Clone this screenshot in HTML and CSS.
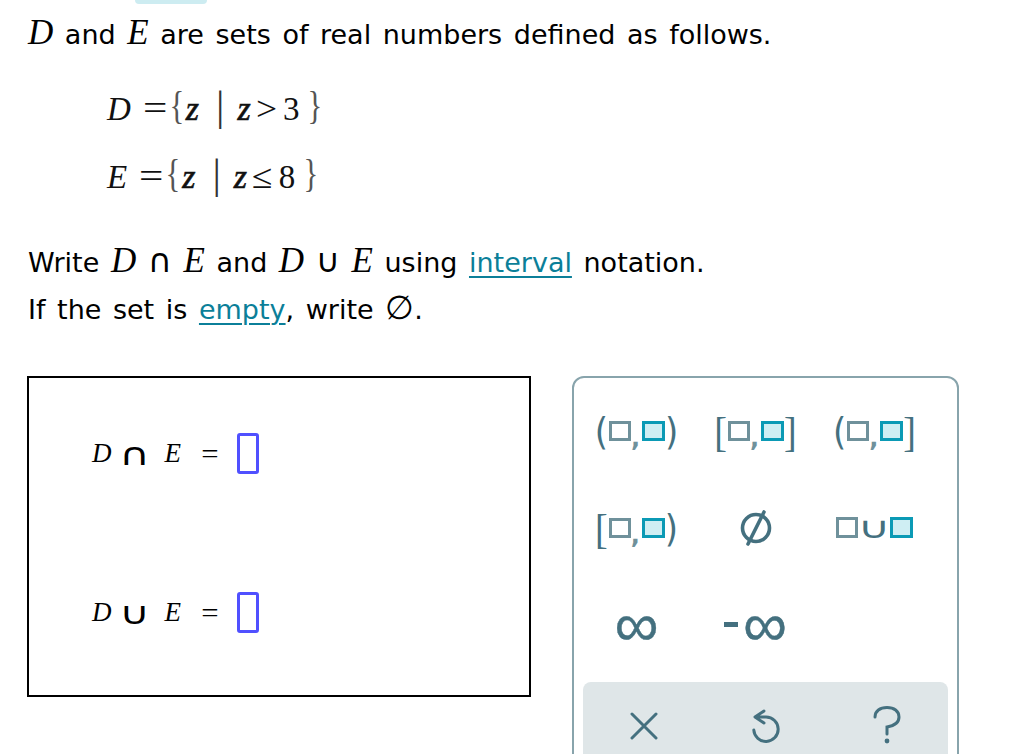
FILE: index.html
```html
<!DOCTYPE html>
<html>
<head>
<meta charset="utf-8">
<link rel="stylesheet" href="styles.css">
</head>
<body>
<div class="page">
  <div class="tab"></div>
  <p class="intro"><i class="m">D</i> and <i class="m">E</i> are sets of real numbers defined as follows.</p>
  <div class="defs">
    <div class="eq"><i class="v">D</i><span class="op">=</span><span class="br">{</span><i class="z">z</i><span class="bar">|</span><i class="z">z</i><span class="op2">&gt;</span><span class="n">3</span><span class="br br2">}</span></div>
    <div class="eq"><i class="v">E</i><span class="op">=</span><span class="br">{</span><i class="z">z</i><span class="bar">|</span><i class="z">z</i><span class="op2">≤</span><span class="n">8</span><span class="br br2">}</span></div>
  </div>
  <p class="q">Write <i class="m">D</i> <span class="set">∩</span> <i class="m">E</i> and <i class="m">D</i> <span class="set">∪</span> <i class="m">E</i> using <a class="lnk" href="#">interval</a> notation.</p>
  <p class="q">If the set is <a class="lnk" href="#">empty</a>, write <span class="empty">∅</span>.</p>

  <div class="work">
    <div class="answers">
      <div class="arow"><i class="av">D</i><span class="aset">∩</span><i class="av ae">E</i><span class="aeq">=</span><span class="slot"></span></div>
      <div class="arow"><i class="av">D</i><span class="aset">∪</span><i class="av ae">E</i><span class="aeq">=</span><span class="slot"></span></div>
    </div>

    <div class="pad">
      <div class="keys">
        <div class="key"><span class="par">(</span><span class="bx g"></span><span class="cm">,</span><span class="bx c"></span><span class="par">)</span></div>
        <div class="key"><span class="par brk">[</span><span class="bx g"></span><span class="cm">,</span><span class="bx c"></span><span class="par brk">]</span></div>
        <div class="key"><span class="par">(</span><span class="bx g"></span><span class="cm">,</span><span class="bx c"></span><span class="par brk">]</span></div>
        <div class="key"><span class="par brk">[</span><span class="bx g"></span><span class="cm">,</span><span class="bx c"></span><span class="par">)</span></div>
        <div class="key">
          <svg class="emptyico" width="38" height="38" viewBox="0 0 38 38"><circle cx="19" cy="19" r="13.5" fill="none" stroke="#44707f" stroke-width="3.6"/><line x1="27" y1="3" x2="11" y2="35" stroke="#44707f" stroke-width="3.6" stroke-linecap="round"/></svg>
        </div>
        <div class="key"><span class="bx g u"></span><span class="cup">∪</span><span class="bx c u"></span></div>
        <div class="key"><span class="inf">∞</span></div>
        <div class="key"><span class="minus"></span><span class="inf">∞</span></div>
      </div>
      <div class="bar2">
        <div class="act">
          <svg width="28" height="28" viewBox="0 0 28 28"><path d="M2 2 L26 26 M26 2 L2 26" stroke="#44707f" stroke-width="3" stroke-linecap="round" fill="none"/></svg>
        </div>
        <div class="act">
          <svg width="30" height="36" viewBox="0 0 30 36"><path d="M4 9 L13 3 M4 9 L13 15 M5 9 H15 A12.2 12.2 0 1 1 2.8 22" stroke="#44707f" stroke-width="3" stroke-linecap="round" stroke-linejoin="round" fill="none"/></svg>
        </div>
        <div class="act">
          <svg width="30" height="40" viewBox="0 0 30 40"><path d="M3 11 C3 5 8 1.5 15 1.5 C22 1.5 27 5 27 11 C27 17 21 20 15 21 L15 28" stroke="#44707f" stroke-width="3" stroke-linecap="round" fill="none"/><circle cx="15" cy="35" r="2.4" fill="#44707f"/></svg>
        </div>
      </div>
    </div>
  </div>
</div>
</body>
</html>
```
FILE: styles.css
```css
html, body {
  margin: 0;
  padding: 0;
  background: #fff;
}
body {
  font-family: "DejaVu Sans", Verdana, sans-serif;
  color: #000;
  overflow: hidden;
}
.page {
  padding-left: 28px;
}
.tab {
  margin-left: 107px;
  width: 72px;
  height: 4px;
  background: #cdecf1;
  border-radius: 0 0 8px 8px;
}
.intro, .q {
  margin: 0;
  font-size: 27px;
  line-height: 47px;
  word-spacing: 3px;
  white-space: nowrap;
}
.intro {
  margin-top: 7px;
}
.m {
  font-family: "Liberation Serif", "Times New Roman", serif;
  font-style: italic;
  font-size: 35px;
  line-height: 0;
}
.set {
  font-family: "DejaVu Sans", sans-serif;
  font-size: 33px;
  line-height: 0;
}
.empty {
  font-family: "DejaVu Serif", serif;
  font-size: 33px;
  line-height: 0;
  font-weight: 200;
}
.lnk {
  color: #0b7f99;
  text-decoration: underline;
  text-underline-offset: 4px;
  text-decoration-thickness: 2px;
}
.defs {
  margin-top: 17px;
  padding-left: 79px;
}
.eq {
  font-family: "Liberation Serif", "Times New Roman", serif;
  font-size: 33px;
  line-height: 68px;
  height: 68px;
  white-space: nowrap;
  color: #111;
}
.eq .v {
  font-style: italic;
}
.eq .op {
  display: inline-block;
  font-size: 36px;
  line-height: 0;
  margin: 0 4px 0 14px;
  transform: scaleX(1.2);
}
.eq .br {
  font-size: 41px;
  color: #555;
  line-height: 0;
  display: inline-block;
  transform: scaleX(0.75) translateY(-1px);
  margin: 0 -1px 0 -2px;
}
.eq .br2 {
  margin-left: 6px;
}
.eq .z {
  font-style: italic;
  font-size: 34px;
  -webkit-text-stroke: 0.6px #111;
}
.eq .bar {
  font-size: 42px;
  line-height: 0;
  margin: 0 13px 0 17px;
  color: #333;
}
.eq .op2 {
  display: inline-block;
  line-height: 0;
  margin: 0 7px 0 6px;
  font-size: 34px;
  transform: scaleX(1.1);
}
.q {
  margin-top: 0;
}
.defs + .q {
  margin-top: 28px;
}
.work {
  margin-top: 43px;
  display: flex;
  align-items: flex-start;
  margin-left: -1px;
  gap: 41px;
}
.answers {
  box-sizing: border-box;
  width: 504px;
  height: 321px;
  border: 2px solid #000;
  padding: 55px 0 0 63px;
  display: flex;
  flex-direction: column;
  gap: 118px;
}
.arow {
  display: flex;
  align-items: center;
  height: 41px;
  font-family: "Liberation Serif", "Times New Roman", serif;
  font-size: 27px;
}
.av {
  font-style: italic;
}
.aset {
  display: inline-block;
  font-family: "DejaVu Sans", sans-serif;
  font-size: 26px;
  margin-left: 13px;
  margin-right: 6px;
  line-height: 1;
  transform: scale(1.6, 1.2);
}
.ae {
  margin-left: 15px;
}
.aeq {
  display: inline-block;
  margin-left: 21px;
  font-size: 28px;
  transform: scaleX(1.1);
}
.slot {
  box-sizing: border-box;
  width: 22px;
  height: 41px;
  margin-left: 19px;
  border: 3px solid #5050ff;
  border-radius: 3px;
}
.pad {
  box-sizing: border-box;
  width: 387px;
  height: 400px;
  border: 2px solid #88a4ac;
  border-radius: 12px;
}
.keys {
  display: grid;
  grid-template-columns: repeat(3, 119px);
  grid-auto-rows: 97px;
  padding: 4px 0 0 3px;
}
.key {
  display: flex;
  align-items: center;
  justify-content: center;
  color: #44707f;
}
.par {
  font-family: "DejaVu Sans", sans-serif;
  font-size: 34px;
  line-height: 1;
  color: #44707f;
  transform: scaleY(1.12);
}
.brk {
  font-family: "Liberation Serif", serif;
  font-size: 38px;
}
.bx {
  box-sizing: border-box;
  width: 22px;
  height: 20px;
  border: 3px solid #6f919b;
  background: #fff;
  margin-left: 1px;
}
.bx.c {
  border-color: #0b9ab5;
  background: #cfeef3;
  width: 23px;
}
.bx.u {
  height: 21px;
  margin: 0;
}
.cm {
  font-family: "DejaVu Sans", sans-serif;
  font-weight: bold;
  font-size: 24px;
  color: #6f919b;
  align-self: center;
  margin-top: 14px;
  margin-right: 1px;
  line-height: 1;
}
.cup {
  display: inline-block;
  font-family: "DejaVu Sans", sans-serif;
  font-size: 30px;
  line-height: 1;
  margin: 0 5px;
  color: #44707f;
  transform: scaleX(1.5);
}
.inf {
  font-family: "Liberation Sans", sans-serif;
  font-size: 62px;
  line-height: 1;
  color: #44707f;
  -webkit-text-stroke: 0.4px #44707f;
}
.minus {
  display: inline-block;
  width: 14px;
  height: 5px;
  background: #44707f;
  margin-right: 5px;
}
.bar2 {
  margin: 9px 9px 0;
  height: 88px;
  background: #dfe6e8;
  border-radius: 8px;
  display: flex;
}
.act {
  flex: 1;
  display: flex;
  align-items: center;
  justify-content: center;
}
```
